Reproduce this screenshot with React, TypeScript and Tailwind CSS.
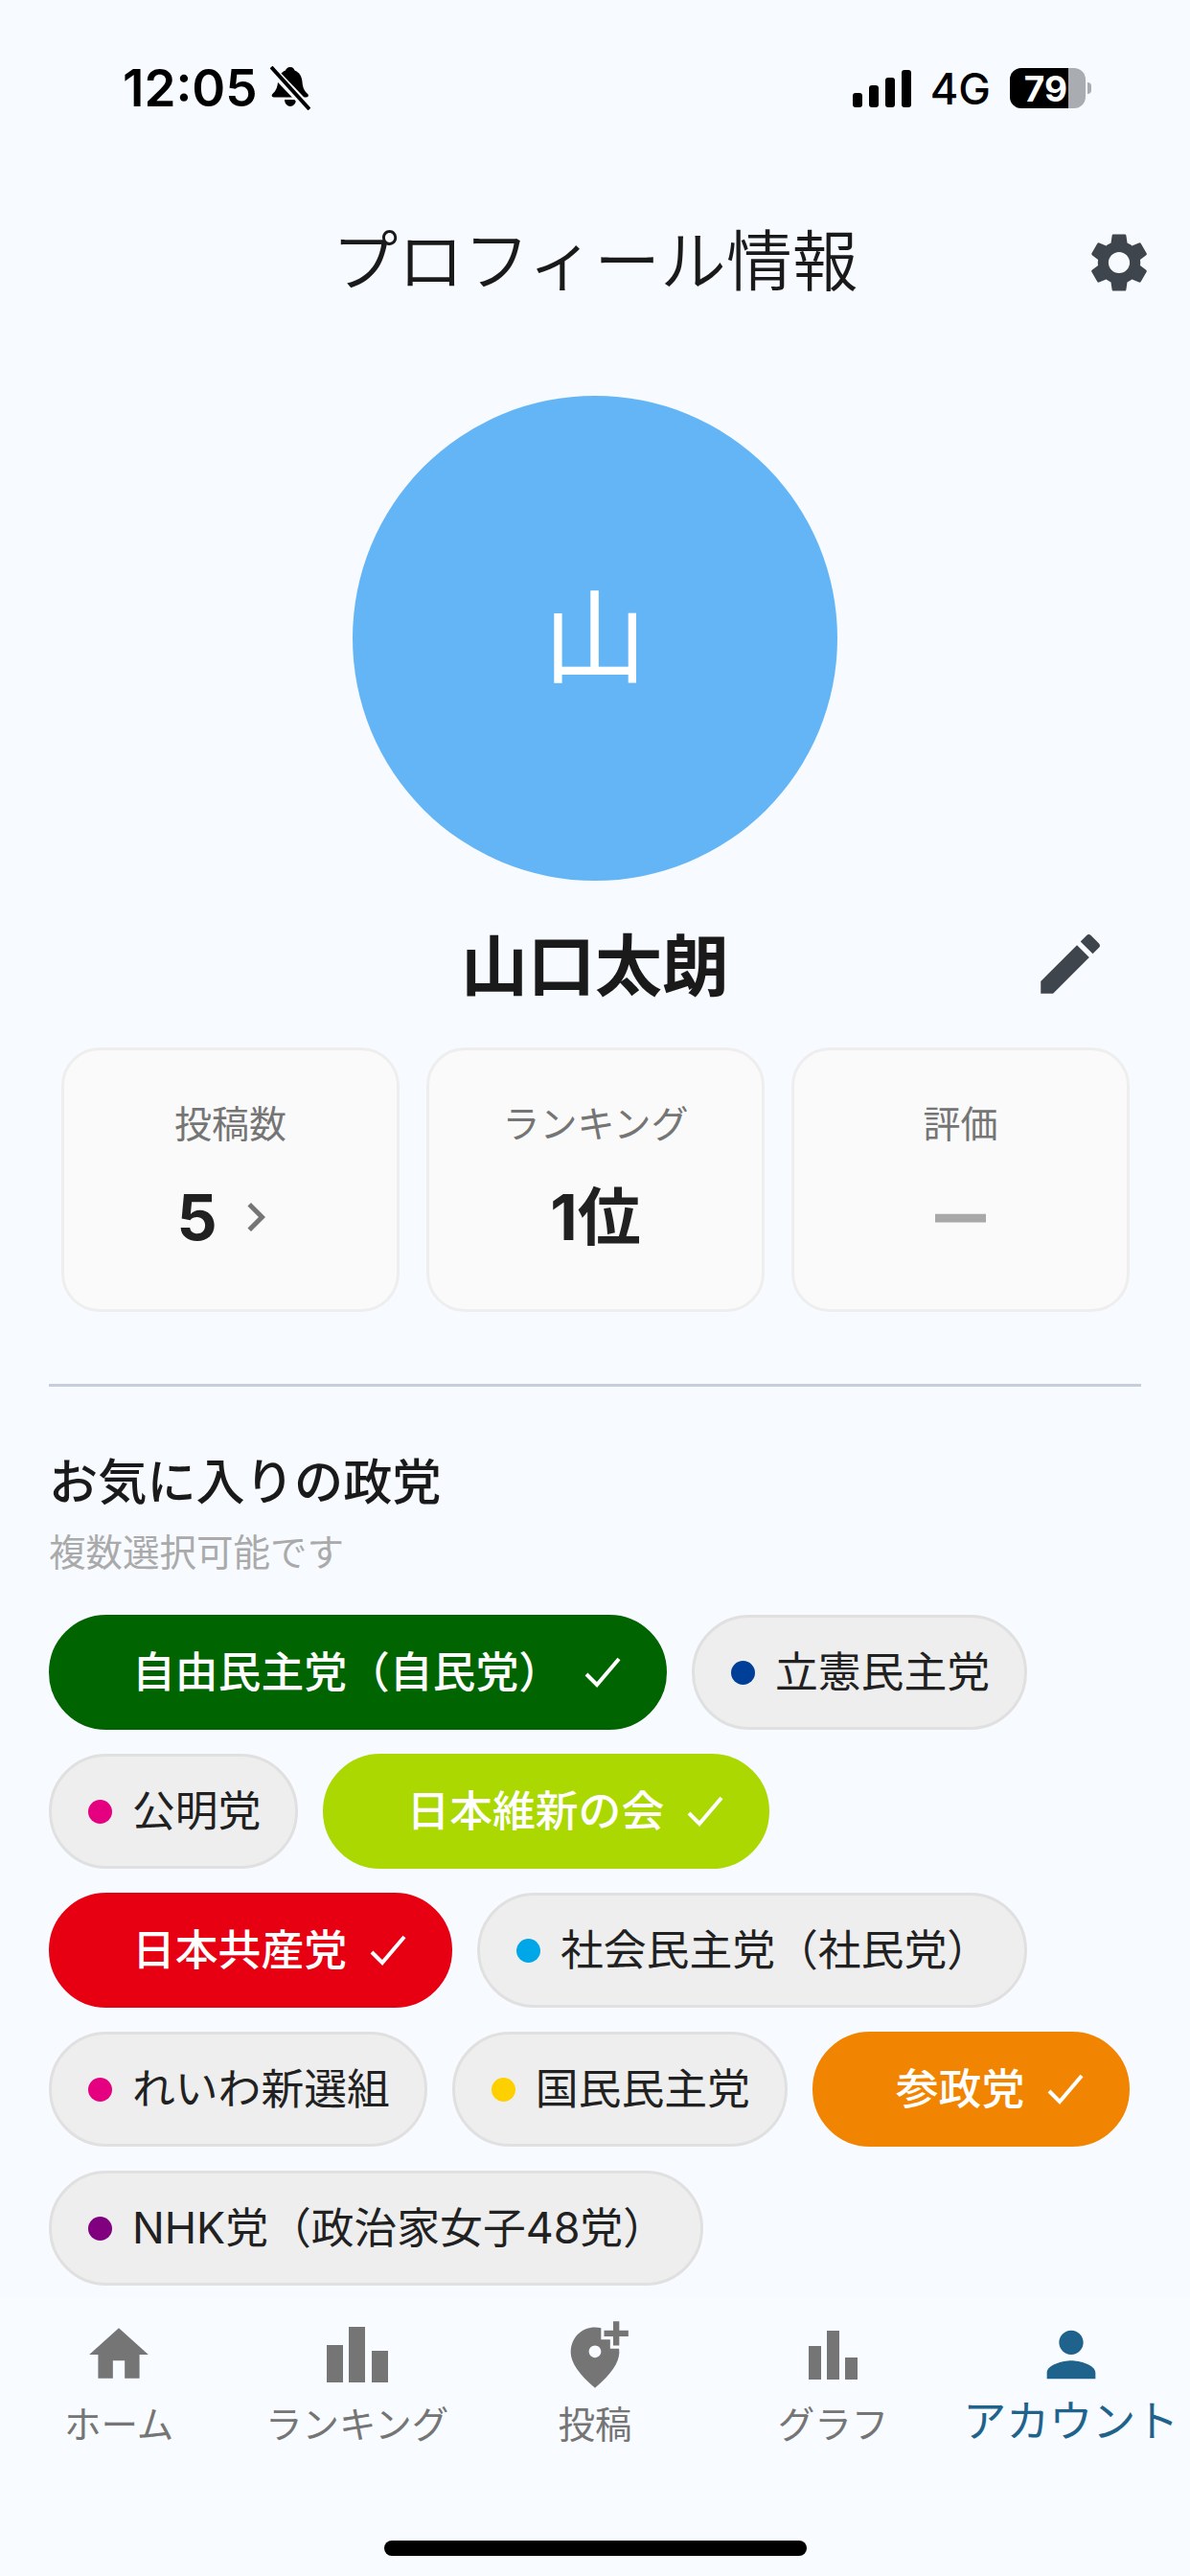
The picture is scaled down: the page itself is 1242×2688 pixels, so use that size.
import React from 'react'
import { MdSettings, MdEdit, MdChevronRight, MdHome, MdPerson, MdAddLocationAlt } from 'react-icons/md'

const jp = "font-['Inter','Noto_Sans_CJK_JP',sans-serif]"

interface Party {
  name: string
  dot: string
  selected?: string
}

const parties: Party[] = [
  { name: '自由民主党（自民党）', dot: 'bg-[#006400]', selected: 'bg-[#006400] border-[#006400]' },
  { name: '立憲民主党', dot: 'bg-[#003f98]' },
  { name: '公明党', dot: 'bg-[#e5007f]' },
  { name: '日本維新の会', dot: 'bg-[#aad800]', selected: 'bg-[#aad800] border-[#aad800]' },
  { name: '日本共産党', dot: 'bg-[#e60012]', selected: 'bg-[#e60012] border-[#e60012]' },
  { name: '社会民主党（社民党）', dot: 'bg-[#00a7e8]' },
  { name: 'れいわ新選組', dot: 'bg-[#e5007f]' },
  { name: '国民民主党', dot: 'bg-[#ffd000]' },
  { name: '参政党', dot: 'bg-[#f18400]', selected: 'bg-[#f18400] border-[#f18400]' },
  { name: 'NHK党（政治家女子48党）', dot: 'bg-[#800080]' },
]

function StatusBar() {
  return (
    <div className="flex h-[132px] items-start justify-between pl-[128px] pr-[103px] pt-[52px]">
      <div className="flex h-[80px] items-center">
        <span className="text-[53px] font-semibold leading-none text-black">12:05</span>
        <svg className="ml-[13px]" width="42" height="46" viewBox="0 0 42 46">
          <path
            d="M21 1c3 0 4 2 4.500 3.500 5 2 7.500 6 8 12 .4 7 3 10 6 13 1 1.500 0 3-2 3H4c-2 0-3-1.500-2-3 3-3 5.600-6 6-13 .5-6 3-10 8-12C16.500 3 18 1 21 1zM15 35h12c0 4-3 7-6 7s-6-3-6-7z"
            fill="#000"
          />
          <path d="M0 2 L40 44" stroke="#f7faff" strokeWidth="9" />
          <path d="M1 1 L41 45" stroke="#000" strokeWidth="4" />
        </svg>
      </div>
      <div className="flex h-[80px] items-center">
        <div className="flex items-end gap-[7px]">
          <div className="h-[15px] w-[10px] rounded-[3px] bg-black" />
          <div className="h-[23px] w-[10px] rounded-[3px] bg-black" />
          <div className="h-[31px] w-[10px] rounded-[3px] bg-black" />
          <div className="h-[39px] w-[10px] rounded-[3px] bg-black" />
        </div>
        <span className="ml-[20px] text-[45px] font-medium leading-none text-black">4G</span>
        <div className="ml-[20px] flex h-[42px] w-[79px] overflow-hidden rounded-[12px] bg-[#a9acb0]">
          <div className="flex h-full w-[61px] items-center justify-end bg-black pr-[1px] text-[37px] font-bold leading-none text-white">
            79
          </div>
        </div>
        <div className="ml-[2px] h-[12px] w-[4px] rounded-r-full bg-[#a9acb0]" />
      </div>
    </div>
  )
}

function StatCard({ label, children }: { label: string; children: React.ReactNode }) {
  return (
    <div className="flex h-[276px] flex-1 flex-col items-center rounded-[40px] border-[3px] border-[#eeeeee] bg-[#fafafa] pt-[49px]">
      <div className="text-[39px] leading-[56px] text-[#757575]">{label}</div>
      <div className="mt-[31px] flex h-[76px] items-center justify-center">{children}</div>
    </div>
  )
}

function PartyChip({ party }: { party: Party }) {
  const on = !!party.selected
  return (
    <div
      className={`flex h-[120px] items-center rounded-full border-[3px] pl-[38px] ${
        on ? `pr-[45px] ${party.selected}` : 'border-[#e0e0e0] bg-[#eeeeee] pr-[36px]'
      }`}
    >
      {on ? <div className="h-[25px] w-[25px]" /> : <div className={`h-[25px] w-[25px] rounded-full ${party.dot}`} />}
      <span className={`ml-[21px] text-[44.800px] leading-none ${on ? 'font-medium text-white' : 'text-[#212121]'}`}>
        {party.name}
      </span>
      {on && (
        <svg className="ml-[24px]" width="38" height="32" viewBox="0 0 38 32" fill="none">
          <path d="M2 18 L13 29 L36 2" stroke="#fff" strokeWidth="4" />
        </svg>
      )}
    </div>
  )
}

function NavItem({ label, active, children }: { label: string; active?: boolean; children: React.ReactNode }) {
  return (
    <div className={`flex flex-1 flex-col items-center ${active ? 'text-[#1f638c]' : 'text-[#757575]'}`}>
      <div className="flex h-[88px] items-center justify-center">{children}</div>
      <span className={active ? 'mt-[-1px] text-[45px] leading-[54px] whitespace-nowrap' : 'mt-[2px] text-[38.500px] leading-[54px]'}>
        {label}
      </span>
    </div>
  )
}

export default function App() {
  return (
    <div className={`flex h-[2688px] w-[1242px] flex-col overflow-hidden bg-[#f7faff] ${jp}`}>
      <StatusBar />

      <div className="relative flex h-[281px] items-center justify-center">
        <h1 className="pt-[2px] text-[68.800px] font-[350] leading-none text-[#1a1a1a]">プロフィール情報</h1>
        <MdSettings className="absolute left-[1131px] top-[105px] text-[#3f454c]" size={74} />
      </div>

      <div className="flex justify-center">
        <div className="flex h-[506px] w-[506px] items-center justify-center rounded-full bg-[#64b5f6] text-[108px] font-normal text-white">
          山
        </div>
      </div>

      <div className="relative flex h-[174px] items-center justify-center pt-[6px]">
        <span className="text-[70px] font-semibold leading-none text-[#1a1a1a]">山口太朗</span>
        <MdEdit className="absolute left-[1076px] top-[46px] text-[#3f454c]" size={82} />
      </div>

      <div className="flex gap-[28px] pl-[64px] pr-[63px]">
        <StatCard label="投稿数">
          <span className="text-[66px] font-bold leading-none text-[#212121]">5</span>
          <MdChevronRight className="ml-[10px] text-[#757575]" size={60} />
        </StatCard>
        <StatCard label="ランキング">
          <span className="text-[66px] font-bold leading-none text-[#212121]">1位</span>
        </StatCard>
        <StatCard label="評価">
          <span className="mt-[-4px] text-[50px] font-bold leading-none text-[#a8a8a8] [-webkit-text-stroke:3px_#a8a8a8]">—</span>
        </StatCard>
      </div>

      <div className="mx-[51px] mt-[75px] h-[3px] bg-[#c6cfd9]" />

      <div className="mt-[69px] pl-[51px] text-[51.200px] font-medium leading-[60px] text-[#1a1a1a]">お気に入りの政党</div>
      <div className="mt-[21px] pl-[51px] text-[38.500px] leading-[46px] text-[#aaaaaa]">複数選択可能です</div>

      <div className="mt-[42px] flex flex-wrap gap-x-[26px] gap-y-[25px] px-[51px]">
        {parties.map(p => (
          <PartyChip key={p.name} party={p} />
        ))}
      </div>

      <div className="mt-auto h-[290px] bg-[#f8fbff] pt-[15px]">
        <div className="flex">
          <NavItem label="ホーム">
            <MdHome size={74} />
          </NavItem>
          <NavItem label="ランキング">
            <svg width="64" height="58" viewBox="0 0 64 58" fill="currentColor">
              <rect x="0" y="19" width="17" height="39" />
              <rect x="23" y="0" width="17" height="58" />
              <rect x="47" y="25" width="17" height="33" />
            </svg>
          </NavItem>
          <NavItem label="投稿">
            <MdAddLocationAlt size={76} />
          </NavItem>
          <NavItem label="グラフ">
            <svg width="51" height="51" viewBox="0 0 51 51" fill="currentColor">
              <rect x="0" y="16" width="13" height="35" />
              <rect x="19" y="0" width="13" height="51" />
              <rect x="38" y="28" width="13" height="23" />
            </svg>
          </NavItem>
          <NavItem label="アカウント" active>
            <MdPerson size={76} />
          </NavItem>
        </div>
        <div className="mx-auto mt-[94px] h-[16px] w-[441px] rounded-full bg-black" />
      </div>
    </div>
  )
}
